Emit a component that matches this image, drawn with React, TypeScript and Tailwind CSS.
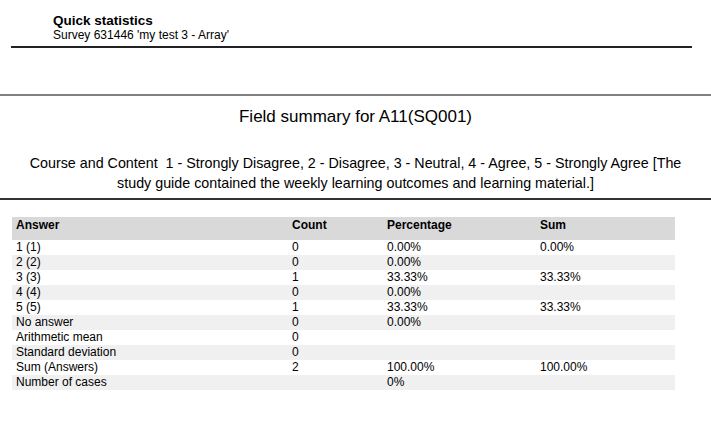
const rows: [string, string, string, string][] = [
  ["1 (1)", "0", "0.00%", "0.00%"],
  ["2 (2)", "0", "0.00%", ""],
  ["3 (3)", "1", "33.33%", "33.33%"],
  ["4 (4)", "0", "0.00%", ""],
  ["5 (5)", "1", "33.33%", "33.33%"],
  ["No answer", "0", "0.00%", ""],
  ["Arithmetic mean", "0", "", ""],
  ["Standard deviation", "0", "", ""],
  ["Sum (Answers)", "2", "100.00%", "100.00%"],
  ["Number of cases", "", "0%", ""],
];

const gridCls = "grid grid-cols-[276px_95px_153px_139px]";

export default function App() {
  return (
    <div className="w-[711px] h-[432px] bg-white text-black font-['Liberation_Sans',Arial,sans-serif] overflow-hidden">
      <div className="pl-[53px] pt-[13px]">
        <h1 className="text-[13.5px] leading-[16px] font-bold">Quick statistics</h1>
        <p className="text-[12px] leading-[13px]">Survey 631446 'my test 3 - Array'</p>
      </div>
      <div className="ml-[11px] mr-[19px] mt-[4px] h-[2px] bg-[#222]" />

      <div className="mt-[46px] h-[2px] bg-[#808080]" />

      <h2 className="mt-[11px] text-center text-[17px] leading-[20px]">Field summary for A11(SQ001)</h2>
      <p className="mt-[26px] px-[20px] text-center text-[14.3px] leading-[20px]">
        Course and Content&nbsp; 1 - Strongly Disagree, 2 - Disagree, 3 - Neutral, 4 - Agree, 5 - Strongly Agree [The study guide contained the weekly learning outcomes and learning material.]
      </p>
      <div className="mt-[5px] h-[2px] bg-[#333]" />

      <div className="ml-[12px] mt-[17px] w-[663px] text-[12px]">
        <div className={`${gridCls} h-[23px] pt-[1px] bg-[#d9d9d9] font-bold leading-[15px]`}>
          <div className="pl-[4px]">Answer</div>
          <div className="pl-[4px]">Count</div>
          <div className="pl-[4px]">Percentage</div>
          <div className="pl-[4px]">Sum</div>
        </div>
        {rows.map((r, i) => (
          <div key={i} className={`${gridCls} h-[15px] leading-[15px] ${i % 2 ? "bg-[#f0f0f0]" : "bg-white"}`}>
            {r.map((c, j) => (
              <div key={j} className="pl-[4px]">{c}</div>
            ))}
          </div>
        ))}
      </div>
    </div>
  );
}
